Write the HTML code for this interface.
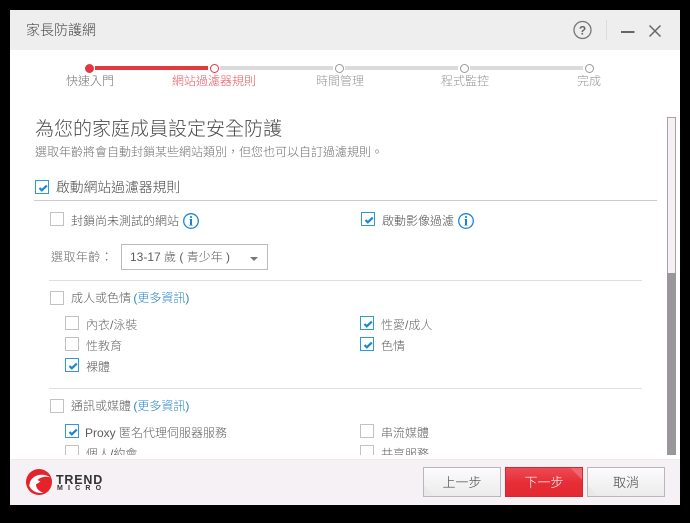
<!DOCTYPE html>
<html lang="zh-Hant"><head><meta charset="utf-8"><title>家長防護網</title>
<style>
*{box-sizing:border-box}
html,body{margin:0;padding:0;width:690px;height:523px;overflow:hidden;background:#000}
body{font-family:"Liberation Sans","Noto Sans CJK TC",sans-serif;font-size:12px;font-weight:300;color:#666;position:relative}
.a{position:absolute;white-space:nowrap;line-height:16px}
#win{position:absolute;left:10px;top:10px;width:670px;height:495px;background:#fff;overflow:hidden}
#page{position:absolute;left:0;top:0;width:690px;height:523px}
.bar{position:absolute;height:4px;top:66px}
.c{position:absolute;width:9px;height:9px;border-radius:50%;top:64px;background:#fff;border:1px solid #999}
.st{position:absolute;top:73px;line-height:16px;font-size:12px;color:#949494;white-space:nowrap}
.cb{position:absolute;width:14px;height:14px;border:1px solid #c2c2c2;background:#fff}
.cb.on{border-color:#2b9ad6}
.cb.on svg{position:absolute;left:1px;top:1px}
.hl{position:absolute;height:1px;background:#dfdfdf}
.i{position:absolute;width:17px;height:17px}
.btn{position:absolute;top:467px;width:78px;height:30px;border:1px solid #b8b8b8;background:linear-gradient(45deg,#e9e9e9 0,#e9e9e9 7px,transparent 7.5px),linear-gradient(#fdfbfd,#ececec);text-align:center;line-height:29px;font-size:13px;color:#444;overflow:hidden}
.btn.red{background:linear-gradient(225deg,#f0666f 0,#f0666f 8px,transparent 8.5px),linear-gradient(#ee4a55,#e62c35 55%,#e32a33);border-color:#d8262e;color:#fff}
a{color:#2a86cc;text-decoration:none;margin-left:-1px}
</style></head><body>
<div id="win"></div>
<div id="page">
<div style="position:absolute;left:10px;top:10px;width:670px;height:40px;background:#eee"></div>
<div class="a" style="left:26px;top:21px;font-size:14px;line-height:18px;color:#484848">家長防護網</div>
<svg style="position:absolute;left:570px;top:15px" width="100" height="30" viewBox="0 0 100 30">
<circle cx="12.500" cy="15" r="8.500" fill="none" stroke="#777" stroke-width="1.300"/>
<text x="12.500" y="19.500" text-anchor="middle" font-family="Liberation Sans" font-weight="700" font-size="12" fill="#666">?</text>
<line x1="36.500" y1="5" x2="36.500" y2="25" stroke="#dcdcdc"/>
<line x1="51" y1="17" x2="64.500" y2="17" stroke="#666" stroke-width="2"/>
<path d="M79.500 10.500l11 11M90.500 10.500l-11 11" stroke="#666" stroke-width="1.500" fill="none"/>
</svg>

<div class="c" style="left:85px;background:#e2383f;border-color:#e2383f"></div>
<div class="bar" style="left:95px;width:113px;background:#e2383f"></div>
<div class="c" style="left:210px;border-color:#e2383f"></div>
<div class="bar" style="left:220px;width:113px;background:#dcdadc"></div>
<div class="c" style="left:335px"></div>
<div class="bar" style="left:345px;width:113px;background:#dcdadc"></div>
<div class="c" style="left:460px"></div>
<div class="bar" style="left:470px;width:113px;background:#dcdadc"></div>
<div class="c" style="left:585px"></div>
<div class="st" style="left:66px;color:#707070">快速入門</div>
<div class="st" style="left:172px;color:#e8555c">網站過濾器規則</div>
<div class="st" style="left:316px">時間管理</div>
<div class="st" style="left:441px">程式監控</div>
<div class="st" style="left:577px">完成</div>

<div class="a" style="left:35px;top:118px;font-size:19px;line-height:24px;color:#4a4a4a">為您的家庭成員設定安全防護</div>
<div class="a" style="left:35px;top:144px;color:#707070">選取年齡將會自動封鎖某些網站類別，但您也可以自訂過濾規則。</div>

<div class="cb on" style="left:35px;top:180px"><svg width="12" height="12"><path d="M2.500 6l2.300 2.300L9.800 3.600" fill="none" stroke="#1b87d0" stroke-width="2.200"/></svg></div>
<div class="a" style="left:56px;top:180px;font-size:13.8px;color:#4a4a4a">啟動網站過濾器規則</div>
<div class="hl" style="left:34px;top:200px;width:623px;background:#ccc"></div>

<div class="cb" style="left:50px;top:212px"></div>
<div class="a" style="left:71px;top:213px;color:#4f4f4f">封鎖尚未測試的網站</div>
<svg class="i" style="left:183px;top:213px" viewBox="0 0 17 17"><circle cx="8" cy="8" r="7.300" fill="#fff" stroke="#1b87d8" stroke-width="1.300"/><text x="8" y="12.500" text-anchor="middle" font-family="Liberation Serif" font-weight="700" font-size="14" fill="#1b7fd0">i</text></svg>
<div class="cb on" style="left:361px;top:212px"><svg width="12" height="12"><path d="M2.500 6l2.300 2.300L9.800 3.600" fill="none" stroke="#1b87d0" stroke-width="2.200"/></svg></div>
<div class="a" style="left:382px;top:213px;color:#4f4f4f">啟動影像過濾</div>
<svg class="i" style="left:458px;top:213px" viewBox="0 0 17 17"><circle cx="8" cy="8" r="7.300" fill="#fff" stroke="#1b87d8" stroke-width="1.300"/><text x="8" y="12.500" text-anchor="middle" font-family="Liberation Serif" font-weight="700" font-size="14" fill="#1b7fd0">i</text></svg>

<div class="a" style="left:51px;top:249px;color:#6a6a6a;letter-spacing:.4px">選取年齡：</div>
<div style="position:absolute;left:121px;top:244px;width:147px;height:26px;border:1px solid #bbb"></div>
<div class="a" style="left:130px;top:249px;color:#5c5c5c">13-17 歲 ( 青少年 )</div>
<svg style="position:absolute;left:250px;top:257px" width="9" height="5"><path d="M0 0h8L4 4z" fill="#777"/></svg>
<div class="hl" style="left:49px;top:280px;width:593px"></div>

<div class="cb" style="left:50px;top:291px"></div>
<div class="a" style="left:71px;top:290px;color:#5c5c5c">成人或色情 <a>(更多資訊)</a></div>
<div class="cb" style="left:65px;top:316px"></div>
<div class="a" style="left:86px;top:317px;color:#6a6a6a">內衣/泳裝</div>
<div class="cb" style="left:65px;top:337px"></div>
<div class="a" style="left:86px;top:338px;color:#6a6a6a">性教育</div>
<div class="cb on" style="left:65px;top:358px"><svg width="12" height="12"><path d="M2.500 6l2.300 2.300L9.800 3.600" fill="none" stroke="#1b87d0" stroke-width="2.200"/></svg></div>
<div class="a" style="left:86px;top:359px;color:#5c5c5c">裸體</div>
<div class="cb on" style="left:360px;top:316px"><svg width="12" height="12"><path d="M2.500 6l2.300 2.300L9.800 3.600" fill="none" stroke="#1b87d0" stroke-width="2.200"/></svg></div>
<div class="a" style="left:381px;top:317px;color:#6a6a6a">性愛/成人</div>
<div class="cb on" style="left:360px;top:337px"><svg width="12" height="12"><path d="M2.500 6l2.300 2.300L9.800 3.600" fill="none" stroke="#1b87d0" stroke-width="2.200"/></svg></div>
<div class="a" style="left:381px;top:338px;color:#5c5c5c">色情</div>
<div class="hl" style="left:49px;top:388px;width:593px"></div>

<div class="cb" style="left:50px;top:399px"></div>
<div class="a" style="left:71px;top:398px;color:#5c5c5c">通訊或媒體 <a>(更多資訊)</a></div>
<div class="cb on" style="left:65px;top:424px"><svg width="12" height="12"><path d="M2.500 6l2.300 2.300L9.800 3.600" fill="none" stroke="#1b87d0" stroke-width="2.200"/></svg></div>
<div class="a" style="left:85px;top:425px;color:#5c5c5c">Proxy 匿名代理伺服器服務</div>
<div class="cb" style="left:360px;top:424px"></div>
<div class="a" style="left:381px;top:425px;color:#5c5c5c">串流媒體</div>
<div class="cb" style="left:65px;top:445px"></div>
<div class="a" style="left:86px;top:446px;color:#5c5c5c">個人/約會</div>
<div class="cb" style="left:360px;top:445px"></div>
<div class="a" style="left:381px;top:446px;color:#5c5c5c">共享服務</div>

<div style="position:absolute;left:667px;top:117px;width:9px;height:338px;background:#f6f0f4;border:1px solid #a5a3a5;border-bottom:0"></div>
<div style="position:absolute;left:667px;top:273px;width:9px;height:182px;background:#9a979a"></div>

<div style="position:absolute;left:10px;top:455px;width:670px;height:4px;background:#fff"></div>
<div style="position:absolute;left:10px;top:459px;width:670px;height:46px;background:#f5f1f5;border-top:1px solid #ececec"></div>

<svg style="position:absolute;left:25px;top:468px" width="28" height="28" viewBox="0 0 28 28">
<circle cx="14" cy="14" r="13" fill="#e5232b"/>
<path d="M4 17C5 12 8 9 12 7.500C17 6 22 7 25.500 9.500C20.500 8 15.500 9 12.500 12L15.500 13.500L11 16.500C11 20 13.500 23 18.500 25C12 25.500 6 23 4 17Z" fill="#fff"/>
<path d="M1.200 16C2 10 6 4 14 3C9 5 5 10 4.500 17Z" fill="#e5232b"/>
</svg>
<div class="a" style="left:56px;top:473px;font-size:12.500px;line-height:14px;font-weight:700;color:#333;letter-spacing:.8px">TREND</div>
<div class="a" style="left:57px;top:484px;font-size:7px;line-height:9px;font-weight:700;color:#333;letter-spacing:5.200px">MICRO</div>

<div class="btn" style="left:423px">上一步</div>
<div class="btn red" style="left:505px">下一步</div>
<div class="btn" style="left:587px">取消</div>
</div>
</body></html>
